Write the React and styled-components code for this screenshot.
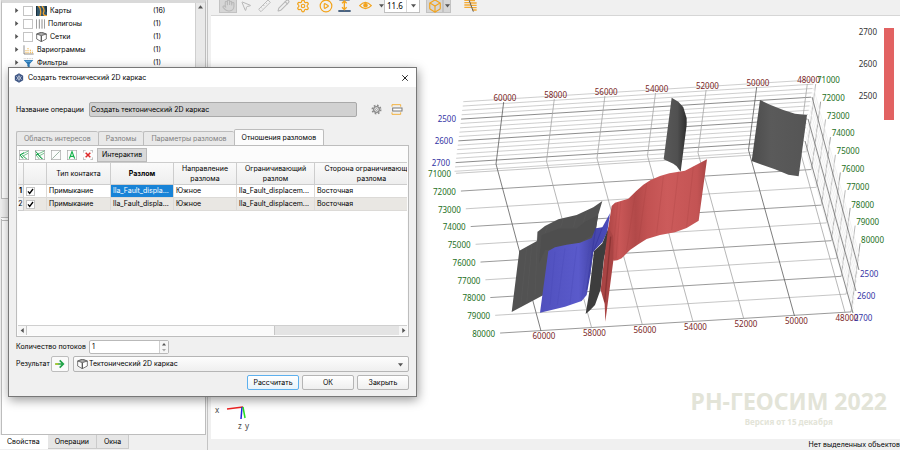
import React from "react";
import styled, { createGlobalStyle } from "styled-components";
import { Hand, MousePointer2, Pencil, Settings, CirclePlay, Box, X } from "lucide-react";

const GlobalStyle = createGlobalStyle`
  * { box-sizing: border-box; }
  html, body { margin: 0; padding: 0; }
  body, button, input, select { font-family: Inter, "Noto Sans", sans-serif; font-size: 7px; line-height: 12px; color: #000; }
  svg { display: block; flex: none; }
`;

const Page = styled.div`
  position: relative;
  display: flex;
  min-height: 100vh;
  background: #f0f0f0;
  overflow: hidden;
`;

/* ---------- left side ---------- */
const SidePane = styled.aside`
  flex: none;
  width: 208px;
  display: flex;
  flex-direction: column;
  border-right: 1px solid #c4c4c4;
`;
const TreePanel = styled.section`
  display: flex;
  height: 199px;
  margin: 0 1px 0 1px;
  background: #fff;
  border: 1px solid #bdbdbd;
  border-top: 3px solid #d9d9d9;
`;
const TreeList = styled.ul`
  flex: 1;
  margin: 0;
  padding: 1px 0 0;
  list-style: none;
`;
const TreeRow = styled.li`
  display: flex;
  align-items: center;
  height: 13px;
  padding-left: 12px;
`;
const TreeName = styled.label`
  display: flex;
  align-items: center;
  gap: 3px;
  width: 130px;
`;
const Expander = styled.span`
  width: 9px;
  flex: none;
`;
const TreeBox = styled.input`
  appearance: none;
  width: 10px;
  height: 10px;
  margin: 0;
  border: 1px solid #c4c4c4;
  background: #fff;
`;
const ScrollTrack = styled.div`
  width: 10px;
  background: #e9e9e9;
  border-left: 1px solid #cfcfcf;
  display: flex;
  justify-content: center;
  padding-top: 1px;
`;
const PropertiesPanel = styled.section`
  flex: 1;
  margin: 18px 1px 0 1px;
  background: #fff;
  border: 1px solid #bdbdbd;
  border-top: 4px double #bdbdbd;
`;
const SideTabs = styled.div`
  display: flex;
  height: 15px;
`;
const SideTab = styled.button`
  height: 14px;
  padding: 0 7px;
  border: 1px solid ${(p) => (p.$active ? "#fff" : "#cbcbcb")};
  border-left-width: 0;
  border-top: 0;
  background: ${(p) => (p.$active ? "#fff" : "#e6e6e6")};
`;

/* ---------- right side ---------- */
const Main = styled.main`
  flex: 1;
  min-width: 0;
  display: flex;
  flex-direction: column;
  padding-left: 3px;
`;
const Toolbar = styled.div`
  display: flex;
  align-items: center;
  height: 16px;
  padding: 0 0 4px 2px;
  border-bottom: 1px solid #d6d6d6;
`;
const Grip = styled.span`
  width: 4px;
  height: 11px;
  margin-right: ${(p) => p.$gap || 0}px;
  background: radial-gradient(circle, #c4c4c4 40%, transparent 45%) 0 0 / 2px 2px;
`;
const ToolButton = styled.button`
  display: flex;
  align-items: center;
  justify-content: center;
  width: ${(p) => p.$w || 18}px;
  height: 15px;
  padding: 0;
  border: 1px solid ${(p) => (p.$pressed ? "#c2c2c2" : "transparent")};
  background: ${(p) => (p.$pressed ? "#d6d6d6" : "transparent")};
`;
const ZoomField = styled.div`
  display: flex;
  align-items: center;
  height: 14px;
  width: 36px;
  margin-right: 6px;
  border: 1px solid #c0c0c0;
  background: #fff;
`;
const ZoomInput = styled.input`
  width: 22px;
  padding: 0 0 0 2px;
  border: 0;
  border-right: 1px solid #d8d8d8;
  background: none;
  font-family: "Noto Sans", sans-serif;
  font-size: 8px;
`;
const Viewport = styled.div`
  position: relative;
  flex: 1;
  display: flex;
  background: #fff;
`;
const Scene = styled.svg`
  width: 100%;
  flex: 1;
  font-family: "Noto Sans", sans-serif;
  font-size: 8px;
`;
const Watermark = styled.div`
  position: absolute;
  right: 13px;
  bottom: 10px;
  text-align: center;
  font-family: "Noto Sans", sans-serif;
  font-weight: 700;
  color: #e3e4d8;
`;
const ProductName = styled.div`
  font-size: 23px;
  line-height: 28px;
`;
const Version = styled.div`
  font-size: 8px;
  line-height: 14px;
`;
const StatusBar = styled.footer`
  height: 11px;
  text-align: right;
  white-space: nowrap;
`;

/* ---------- dialog ---------- */
const Dialog = styled.section`
  position: absolute;
  left: 8px;
  top: 67px;
  width: 409px;
  display: flex;
  flex-direction: column;
  background: #f0f0f0;
  border: 1px solid #777;
  box-shadow: 1px 3px 10px rgba(0, 0, 0, 0.4);
`;
const TitleBar = styled.header`
  display: flex;
  align-items: center;
  gap: 4px;
  height: 19px;
  padding: 0 6px 0 5px;
  background: #fff;
`;
const Title = styled.h1`
  flex: 1;
  margin: 0;
  font-size: 7px;
  font-weight: 400;
`;
const PlainButton = styled.button`
  padding: 0;
  border: 0;
  background: none;
`;
const Body = styled.div`
  display: flex;
  flex-direction: column;
  padding: 15px 7px 6px;
`;
const FormRow = styled.div`
  display: flex;
  align-items: center;
  height: ${(p) => p.$h || 15}px;
  white-space: nowrap;
`;
const FieldLabel = styled.label`
  width: ${(p) => p.$w}px;
  flex: none;
`;
const NameInput = styled.input`
  width: 268px;
  height: 15px;
  margin-right: 14px;
  padding: 0 1px;
  border: 1px solid #a9a9a9;
  border-radius: 2px;
  background: #d1d1d1;
`;
const TabStrip = styled.div`
  display: flex;
  align-items: flex-end;
  height: 16px;
  margin-top: 12px;
`;
const Tab = styled.button`
  height: ${(p) => (p.$active ? 17 : 14)}px;
  margin-bottom: ${(p) => (p.$active ? -1 : 0)}px;
  padding: 0 7px;
  border: 1px solid #bdbdbd;
  border-right-width: ${(p) => (p.$active ? 1 : 0)}px;
  border-bottom: 0;
  border-radius: 2px 2px 0 0;
  background: ${(p) => (p.$active ? "#fcfcfc" : "#e9e9e9")};
  color: ${(p) => (p.$active ? "#000" : "#808080")};
  white-space: nowrap;
`;
const TabPanel = styled.div`
  padding: 1px;
  border: 1px solid #bdbdbd;
  background: #fcfcfc;
`;
const IconBar = styled.div`
  display: flex;
  align-items: center;
  gap: 6px;
  height: 15px;
  padding-left: 1px;
`;
const ModeButton = styled.button`
  height: 14px;
  width: 50px;
  margin-left: -2px;
  padding: 0;
  border: 1px solid #bababa;
  background: #d9d9d9;
`;
const TableArea = styled.div`
  height: 163px;
  overflow: hidden;
  background: #fff;
`;
const Grid = styled.table`
  width: 411px;
  table-layout: fixed;
  border-collapse: separate;
  border-spacing: 0;
`;
const Head = styled.th`
  height: 23px;
  padding: 1px 0 0;
  border: 1px solid #cdcdcd;
  border-width: 1px 1px 1px 0;
  background: linear-gradient(#fafafa, #eeeeee);
  font-weight: ${(p) => (p.$bold ? 700 : 400)};
  line-height: 10px;
  white-space: pre;
`;
const Cell = styled.td`
  height: 13px;
  padding: 0 0 0 2px;
  border: 1px solid #dcdad7;
  border-width: 0 1px 1px 0;
  line-height: 12px;
  white-space: nowrap;
  background: ${(p) => (p.$selected ? "#1883d7" : p.$alt ? "#e9e7e3" : "#fff")};
  color: ${(p) => (p.$selected ? "#fff" : "#000")};
`;
const RowNumber = styled.th`
  padding: 0;
  border: 1px solid #cdcdcd;
  border-width: 0 1px 1px 0;
  background: #f2f2f2;
  line-height: 12px;
  font-weight: ${(p) => (p.$bold ? 700 : 400)};
`;
const CheckBox = styled.label`
  display: grid;
  width: 9px;
  height: 9px;
  > * { grid-area: 1 / 1; }
`;
const CheckInput = styled.input`
  appearance: none;
  margin: 0;
  border: 1px solid #c4c4c4;
  background: #fff;
  & + svg { visibility: hidden; }
  &:checked + svg { visibility: visible; }
`;
const HScroll = styled.div`
  display: flex;
  align-items: center;
  height: 10px;
  border-top: 1px solid #cfcfcf;
  background: #e4e4e4;
`;
const ScrollCap = styled.span`
  display: flex;
  align-items: center;
  justify-content: center;
  width: 8px;
  height: 9px;
  background: #f6f6f6;
`;
const ScrollThumb = styled.span`
  width: 64%;
  height: 9px;
  margin-right: auto;
  border: solid #c6c6c6;
  border-width: 0 1px;
  background: #fafafa;
`;
const SpinBox = styled.div`
  display: flex;
  width: 80px;
  height: 14px;
  border: 1px solid #b9b9b9;
  border-radius: 2px;
  background: #fff;
`;
const SpinInput = styled.input`
  flex: 1;
  min-width: 0;
  padding: 0 2px;
  border: 0;
  background: none;
  appearance: textfield;
  &::-webkit-inner-spin-button { display: none; }
`;
const SpinArrows = styled.span`
  display: flex;
  flex-direction: column;
  align-items: center;
  justify-content: center;
  gap: 2px;
  width: 9px;
  border-left: 1px solid #cfcfcf;
  background: #f6f6f6;
`;
const ArrowButton = styled.button`
  display: flex;
  align-items: center;
  justify-content: center;
  width: 18px;
  height: 16px;
  margin-right: 4px;
  padding: 0;
  border: 1px solid #bdbdbd;
  border-radius: 2px;
  background: #fafafa;
`;
const SelectBox = styled.div`
  flex: 1;
  display: flex;
  align-items: center;
  height: 16px;
  padding: 0 5px 0 3px;
  border: 1px solid #b5b5b5;
  border-radius: 2px;
  background: linear-gradient(#fdfdfd, #efefef);
`;
const ResultSelect = styled.select`
  appearance: none;
  flex: 1;
  padding: 0 1px;
  border: 0;
  background: none;
`;
const Actions = styled.div`
  display: flex;
  justify-content: flex-end;
  gap: 3px;
  margin-top: 3px;
`;
const ActionButton = styled.button`
  width: 52px;
  height: 15px;
  padding: 0;
  border: 1px solid ${(p) => (p.$primary ? "#5db0ee" : "#b5b5b5")};
  border-radius: 2px;
  background: linear-gradient(#ffffff, ${(p) => (p.$primary ? "#e8f3fb" : "#efefef")});
`;

/* ---------- small drawings ---------- */
const Triangle = ({ dir = "down", size = 5, color = "#555" }) => {
  const d = { down: "M0 2H8L4 7Z", up: "M0 7H8L4 2Z", right: "M2 0V8L7 4Z", left: "M6 0V8L1 4Z" }[dir];
  return <svg width={size} height={size} viewBox="0 0 8 8"><path d={d} fill={color} /></svg>;
};

const Tick = () => (
  <svg width="9" height="9" viewBox="0 0 27 27"><path d="M6 13L11 19L21 6" fill="none" stroke="#000" strokeWidth="4" /></svg>
);
const MapIcon = () => (
  <svg width="11" height="10" viewBox="0 0 33 30">
    <rect width="33" height="30" fill="#31566b" />
    <path d="M7 0Q18 8 12 30M18 0Q27 10 23 19T33 30" stroke="#f0a436" strokeWidth="4" fill="none" />
    <path d="M1 0V30M29 0L33 18" stroke="#192e3d" strokeWidth="4" />
  </svg>
);
const PolygonsIcon = () => (
  <svg width="9" height="10" viewBox="0 0 27 30"><path d="M1 1V29M10 1V29M18 1V29M26 1V29" stroke="#555" strokeWidth="2" /></svg>
);
const CubeIcon = () => (
  <svg width="11" height="10" viewBox="0 0 33 30" fill="none" stroke="#5a5a5a" strokeWidth="2.4" strokeLinejoin="round">
    <path d="M2 6L16 1L31 6V21L16 29L2 21Z" fill="#fff" />
    <path d="M2 6L16 11L31 6L16 1Z" fill="#aaa" />
    <path d="M16 11V29" strokeWidth="4" />
  </svg>
);
const VariogramIcon = () => (
  <svg width="11" height="10" viewBox="0 0 33 30"><path d="M3 1V27H32" stroke="#555" strokeWidth="2" fill="none" /><path d="M9 25V15M15 25V7M22 25V12M28 25V17" stroke="#eeb550" strokeWidth="3" strokeDasharray="4 2" /></svg>
);
const FilterIcon = () => (
  <svg width="11" height="10" viewBox="0 0 33 30"><path d="M2 2H31" stroke="#aaa" strokeWidth="2" strokeDasharray="3 2" /><path d="M2 6H31L20 18V29L13 25V18Z" fill="#2b79b7" /><path d="M6 8H27L22 12H10Z" fill="#5aa5dc" /></svg>
);
const AppIcon = () => (
  <svg width="10" height="10" viewBox="0 0 27 30">
    <path d="M13.500 1L26 8V22L13.500 29L1 22V8Z" fill="#3d5583" />
    <path d="M13.500 5V11M13.500 19V25M5 10L10 13M17 17L22 20M22 10L17 13M10 17L5 20" stroke="#c9d3e8" strokeWidth="2" />
    <circle cx="13.500" cy="15" r="4" fill="none" stroke="#fff" strokeWidth="2" />
  </svg>
);
const EyeIcon = () => (
  <svg width="13" height="9" viewBox="0 0 39 27" fill="none" stroke="#f2a31b" strokeWidth="3.500">
    <path d="M2 14Q19 -6 37 14Q19 32 2 14Z" /><circle cx="19.500" cy="13" r="5" fill="#f2a31b" />
  </svg>
);
const LevelsIcon = () => (
  <svg width="13" height="13" viewBox="0 0 39 39"><path d="M4 3H35" stroke="#29486b" strokeWidth="3" /><path d="M1 36H38" stroke="#29486b" strokeWidth="5" /><path d="M19 7V31M12 13L19 6L26 13M12 25L19 32L26 25" stroke="#f4a51c" strokeWidth="4" fill="none" /></svg>
);
const RulerIcon = () => (
  <svg width="13" height="13" viewBox="0 0 39 39" fill="none" stroke="#bcbcbc" strokeWidth="3"><path d="M2 31L30 3L37 10L9 38Z" /><path d="M9 25L12 28M16 18L19 21M23 11L26 14" /></svg>
);
const FaultLayersIcon = () => (
  <svg width="13" height="13" viewBox="0 0 39 39"><path d="M1 4H14M1 11H17M1 18H19M1 25H22M18 12H38M20 19H38M23 26H38M26 33H38M17 5H33" stroke="#f4ab36" strokeWidth="4" /><path d="M14 0L28 38" stroke="#444" strokeWidth="2.500" /></svg>
);
const RelationIcon = ({ kind }) => (
  <svg width="10" height="10" viewBox="0 0 30 30" fill="none">
    {kind !== "delete" && <rect x="1" y="1" width="28" height="28" stroke="#a5a5a5" strokeWidth="2" />}
    {(kind === "abut" || kind === "cross") && <path d="M28 3L3 15L13 27M27 10L12 18L20 26M9 15L24 27" stroke="#58b878" strokeWidth="2.500" />}
    {kind === "abut" && <path d="M15 8L3 15L11 24" stroke="#16a34a" strokeWidth="3" />}
    {kind === "cross" && <path d="M2 4L20 26M3 15L12 12" stroke="#16a34a" strokeWidth="3" />}
    {kind === "none" && <path d="M4 26L26 4" stroke="#8aa594" strokeWidth="2.500" />}
    {kind === "auto" && <path d="M7 26L15 5L23 26M10 19H20" stroke="#14b24b" strokeWidth="3.500" />}
    {kind === "delete" && (
      <>
        <path d="M8 1H1V8M22 1H29V8M8 29H1V22M22 29H29V22" stroke="#999" strokeWidth="2" />
        <path d="M8 8L22 22M22 8L8 22" stroke="#dd2929" strokeWidth="4.500" />
      </>
    )}
  </svg>
);
const GearIcon = () => (
  <svg width="11" height="11" viewBox="0 0 33 33" fill="none" stroke="#8a8a8a">
    <circle cx="16.500" cy="16.500" r="12.500" strokeWidth="5" strokeDasharray="5 4.800" />
    <circle cx="16.500" cy="16.500" r="8.500" strokeWidth="4" />
    <circle cx="16.500" cy="16.500" r="3" strokeWidth="2" />
  </svg>
);
const RenameIcon = () => (
  <svg width="12" height="11" viewBox="0 0 36 33" fill="none"><path d="M3 8V2H29V8M3 25V31H29V25" stroke="#f3b23f" strokeWidth="3" /><rect x="5" y="12" width="28" height="9" fill="#fff" stroke="#777" strokeWidth="3" /></svg>
);
const GreenArrow = () => (
  <svg width="10" height="10" viewBox="0 0 30 30" fill="none" strokeWidth="5"><path d="M1 15H24M14 4L25 15L14 26" stroke="#20a348" /><path d="M1 15H10" stroke="#b9c929" /></svg>
);

/* ---------- 3D scene ---------- */
const RED = "#7a2626";
const GREEN = "#237023";
const BLUE = "#3434a4";
const range = (n) => Array.from({ length: n }, (_, i) => i);

const FloorAndWalls = () => (
  <g fill="none" strokeWidth=".8">
    {range(17).map((i) => (
      <line key={`d${i}`} x1={463.3 - i * 0.55} y1={101.7 + i * 4.35} x2={814 - i * 0.75} y2={79.8 + i * 4.35}
        stroke={i % 5 === 4 ? "#6e6e6e" : "#c2c2c2"} />
    ))}
    {range(10).map((i) => (
      <line key={`f${i}`} x1={456 + i * 4.9} y1={173.3 + i * 17.75} x2={806.7 + i * 4.93} y2={151.7 + i * 17.8}
        stroke={i % 2 || i === 9 ? "#808080" : "#b8b8b8"} />
    ))}
    {range(7).map((i) => (
      <polyline key={`x${i}`}
        points={`${503.7 + i * 50.6},${102 - i * 3} ${496 + i * 50.5},${164 - i * 2.8} ${541 + i * 50.7},${331 - i * 3}`}
        stroke={i === 0 || i === 5 ? "#5c5c5c" : "#a4a4a4"} />
    ))}
    {range(10).map((i) => (
      <line key={`y${i}`} x1={815.7 + i * 4.93} y1={84 + i * 17.7} x2={806.7 + i * 4.93} y2={151.7 + i * 17.8} stroke={i % 2 ? "#888" : "#aaa"} />
    ))}
    {range(14).map((i) => (
      <line key={`w${i}`} x1={813.5 - i * 0.7} y1={88 + i * 4.4} x2={859.5 - i * 0.5} y2={256 + i * 4.4} stroke="#eeeeee" />
    ))}
    <path d="M812 97L859 270M808 119L856 291M805 141L853 313" stroke="#6e6e6e" />
  </g>
);

const AxisLabels = () => (
  <g>
    <g fill={RED} textAnchor="middle">
      {range(7).map((i) => <text key={`t${i}`} x={505 + i * 50.6} y={101 - i * 3}>{60000 - i * 2000}</text>)}
      {range(7).map((i) => <text key={`b${i}`} x={544 + i * 50.5} y={339 - i * 3}>{60000 - i * 2000}</text>)}
    </g>
    <g fill={GREEN}>
      {range(10).map((i) => <text key={`l${i}`} x={451 + i * 4.9} y={177 + i * 17.75} textAnchor="end">{71000 + i * 1000}</text>)}
      {range(10).map((i) => <text key={`r${i}`} x={817 + i * 4.9} y={83 + i * 17.8}>{71000 + i * 1000}</text>)}
    </g>
    <g fill={BLUE}>
      {range(3).map((i) => <text key={`z${i}`} x={456 - i * 3} y={122 + i * 22} textAnchor="end">{2500 + i * 100}</text>)}
      {range(3).map((i) => <text key={`q${i}`} x={860 - i * 3} y={277 + i * 22}>{2500 + i * 100}</text>)}
    </g>
  </g>
);

const Faults = () => (
  <g>
    <defs>
      <linearGradient id="dark" x1="0" x2="1"><stop offset="0" stopColor="#595959" /><stop offset=".6" stopColor="#505050" /><stop offset="1" stopColor="#2e2e2e" /></linearGradient>
      <linearGradient id="slab" x1="0" x2="1"><stop offset="0" stopColor="#4c4c4c" /><stop offset=".35" stopColor="#5a5a5a" /><stop offset="1" stopColor="#555" /></linearGradient>
      <linearGradient id="folds" x1="0" x2="1">
        <stop offset="0" stopColor="#ad4545" /><stop offset=".12" stopColor="#c95757" /><stop offset=".28" stopColor="#b24949" /><stop offset=".4" stopColor="#c25252" />
        <stop offset=".6" stopColor="#cc5b5b" /><stop offset=".9" stopColor="#c45454" /><stop offset="1" stopColor="#a94646" />
      </linearGradient>
      <linearGradient id="blueFold" x1="0" x2="1"><stop offset="0" stopColor="#5050bd" /><stop offset=".55" stopColor="#5a5acb" /><stop offset=".75" stopColor="#4646a9" /><stop offset="1" stopColor="#4b4bbd" /></linearGradient>
    </defs>
    <g transform="translate(660 10) scale(.33333)">
      <path d="M35 263L55 275L70 292L80 325L80 345L62 485L50 469L40 461L11 448Z" fill="url(#dark)" />
      <path d="M300 270L330 284L370 300L405 311L441 315L416 499L385 494L345 478L275 453Z" fill="url(#slab)" />
    </g>
    <g transform="translate(430 190) scale(.33333)">
      <path d="M517 33L490 52L440 75L385 88L345 108L323 125L321 153L268 182L245 366L335 318L480 260L503 80Z" fill="#525252" />
      <path d="M335 136L385 116L440 116L465 95L505 76L495 130L430 170L345 180L327 220Z" fill="#4e4e4e" />
      <path d="M440 76L430 112M400 85L392 112M470 65L460 97M355 105L345 130M323 125L315 315M290 172L272 350M305 165L290 342" stroke="#5c5c5c" strokeWidth="3" opacity=".4" />
      <path d="M355 183L375 172L410 164L450 158L485 144L497 115L517 112L540 70L532 125L518 155L490 185L480 260L470 315L455 333L405 350L330 368Z" fill="url(#blueFold)" />
      <path d="M375 185L360 345M405 175L382 345M440 170L420 340M480 160L455 325" stroke="#4747b5" strokeWidth="3" opacity=".3" />
      <path d="M497 115L470 300M517 112L490 185" stroke="#3737a0" strokeWidth="3" opacity=".7" />
      <path d="M545 48L555 38L595 26L618 4L640 -16L662 -30L690 -42L718 -50L765 -58L831 -92L806 92L770 114L735 127L690 135L650 147L625 163L600 180L575 205L562 211L550 212L533 125Z" fill="url(#folds)" />
      <path d="M572 35L558 205M615 15L590 180M650 -20L626 155M700 -40L680 130M745 -55L725 120M790 -70L770 110M563 40L548 190" stroke="#a53e3e" strokeWidth="3" opacity=".25" />
      <path d="M492 184L517 160L533 120L536 142L522 205L512 298L495 345L480 361L467 372L478 305Z" fill="#3d3d3d" />
      <path d="M535 110L549 138L550 212L526 395L524 342L512 300L522 210Z" fill="#a94444" />
      <path d="M542 140L524 335" stroke="#8c3434" strokeWidth="4" />
    </g>
  </g>
);

const AxisTriad = () => (
  <g fill="#444">
    <g strokeWidth="1.500">
      <path d="M227 409L243 407" stroke="#ee2222" />
      <path d="M242 407L241 419" stroke="#2222dd" />
      <path d="M243 407L245 418" stroke="#22dd22" />
    </g>
    <text x="215" y="413">x</text><text x="238" y="429">z</text><text x="245" y="429">y</text>
  </g>
);

const Colorbar = () => (
  <g fill="#333" textAnchor="end">
    <rect x="884" y="28" width="10" height="92" fill="#e26262" />
    <text x="877" y="35">2700</text><text x="877" y="67">2600</text><text x="877" y="99">2500</text>
  </g>
);

/* ---------- data ---------- */
const treeItems = [
  { name: "Карты", count: 16, Icon: MapIcon, box: true },
  { name: "Полигоны", count: 1, Icon: PolygonsIcon, box: true },
  { name: "Сетки", count: 1, Icon: CubeIcon, box: true },
  { name: "Вариограммы", count: 1, Icon: VariogramIcon },
  { name: "Фильтры", count: 1, Icon: FilterIcon },
];
const dialogTabs = ["Область интересов", "Разломы", "Параметры разломов", "Отношения разломов"];
const columns = ["", "Тип контакта", "Разлом", "Направление\nразлома", "Ограничивающий\nразлом", "Сторона ограничивающего\nразлома"];
const widths = [6, 23, 64, 63, 63, 78, 114];
const relations = ["Примыкание", "lla_Fault_displa...", "Южное", "lla_Fault_displacem...", "Восточная"];
const GRAY = "#b8b8b8";
const ORANGE = "#f2a31b";

function SideArea() {
  return (
    <SidePane>
      <TreePanel>
        <TreeList>
          {treeItems.map(({ name, count, Icon, box }) => (
            <TreeRow key={name}>
              <Expander><Triangle dir="right" /></Expander>
              <TreeName>
                {box && <TreeBox type="checkbox" />}
                <Icon />
                {name}
              </TreeName>
              <span>({count})</span>
            </TreeRow>
          ))}
        </TreeList>
        <ScrollTrack><Triangle dir="up" /></ScrollTrack>
      </TreePanel>
      <PropertiesPanel />
      <SideTabs>
        <SideTab $active>Свойства</SideTab>
        <SideTab>Операции</SideTab>
        <SideTab>Окна</SideTab>
      </SideTabs>
    </SidePane>
  );
}

function SceneToolbar() {
  return (
    <Toolbar>
      <Grip $gap={2} />
      <ToolButton $pressed aria-label="Hand"><Hand size={13} color={GRAY} /></ToolButton>
      <ToolButton aria-label="Select"><MousePointer2 size={12} color={GRAY} /></ToolButton>
      <ToolButton $w={19} aria-label="Measure"><RulerIcon /></ToolButton>
      <ToolButton $w={19} aria-label="Edit"><Pencil size={13} color={GRAY} /></ToolButton>
      <ToolButton $w={20} aria-label="Settings"><Settings size={14} color={ORANGE} /></ToolButton>
      <ToolButton $w={25} aria-label="Play"><CirclePlay size={14} color={ORANGE} /></ToolButton>
      <ToolButton $w={13} aria-label="Levels"><LevelsIcon /></ToolButton>
      <ToolButton $w={28} aria-label="Visibility"><EyeIcon /></ToolButton>
      <ToolButton $w={5} aria-label="Visibility menu"><Triangle /></ToolButton>
      <ZoomField>
        <ZoomInput aria-label="Scale" defaultValue="11.6" />
        <ToolButton $w={12} aria-label="Scale menu"><Triangle /></ToolButton>
      </ZoomField>
      <ToolButton $pressed $w={17} aria-label="Box"><Box size={14} color={ORANGE} /></ToolButton>
      <ToolButton $pressed $w={8} aria-label="Box menu"><Triangle /></ToolButton>
      <Grip $gap={3} />
      <ToolButton $w={24} aria-label="Faults"><FaultLayersIcon /></ToolButton>
    </Toolbar>
  );
}

function FaultDialog() {
  return (
    <Dialog role="dialog" aria-labelledby="dialog-title">
      <TitleBar>
        <AppIcon />
        <Title id="dialog-title">Создать тектонический 2D каркас</Title>
        <PlainButton aria-label="Close"><X size={10} strokeWidth={2} /></PlainButton>
      </TitleBar>
      <Body>
        <FormRow>
          <FieldLabel $w={73} htmlFor="op-name">Название операции</FieldLabel>
          <NameInput id="op-name" readOnly value="Создать тектонический 2D каркас" />
          <PlainButton aria-label="Options"><GearIcon /></PlainButton>
          <Expander />
          <PlainButton aria-label="Rename"><RenameIcon /></PlainButton>
        </FormRow>
        <TabStrip role="tablist">
          {dialogTabs.map((t, i) => <Tab key={t} role="tab" $active={i === 3}>{t}</Tab>)}
        </TabStrip>
        <TabPanel>
          <IconBar>
            {["abut", "cross", "none", "auto", "delete"].map((kind) => (
              <PlainButton key={kind} aria-label={kind}><RelationIcon kind={kind} /></PlainButton>
            ))}
            <ModeButton>Интерактив</ModeButton>
          </IconBar>
          <TableArea>
            <Grid>
              <colgroup>{widths.map((w, i) => <col key={i} width={w} />)}</colgroup>
              <thead>
                <tr>
                  <Head />
                  {columns.map((c) => <Head key={c} $bold={c === "Разлом"}>{c}</Head>)}
                </tr>
              </thead>
              <tbody>
                {[1, 2].map((n) => (
                  <tr key={n}>
                    <RowNumber $bold={n === 1}>{n}</RowNumber>
                    <Cell $alt={n === 2}>
                      <CheckBox>
                        <CheckInput type="checkbox" defaultChecked aria-label={`${n}`} />
                        <Tick />
                      </CheckBox>
                    </Cell>
                    {relations.map((r, i) => (
                      <Cell key={r} $alt={n === 2} $selected={n === 1 && i === 1}>{r}</Cell>
                    ))}
                  </tr>
                ))}
              </tbody>
            </Grid>
          </TableArea>
          <HScroll>
            <ScrollCap><Triangle dir="left" /></ScrollCap>
            <ScrollThumb />
            <ScrollCap><Triangle dir="right" /></ScrollCap>
          </HScroll>
        </TabPanel>
        <FormRow $h={19}>
          <FieldLabel $w={73} htmlFor="threads">Количество потоков</FieldLabel>
          <SpinBox>
            <SpinInput id="threads" type="number" defaultValue={1} />
            <SpinArrows><Triangle dir="up" size={4} /><Triangle size={4} color="#aaa" /></SpinArrows>
          </SpinBox>
        </FormRow>
        <FormRow $h={16}>
          <FieldLabel $w={35} htmlFor="result">Результат</FieldLabel>
          <ArrowButton aria-label="Go"><GreenArrow /></ArrowButton>
          <SelectBox>
            <CubeIcon />
            <ResultSelect id="result"><option>Тектонический 2D каркас</option></ResultSelect>
            <Triangle />
          </SelectBox>
        </FormRow>
        <Actions>
          <ActionButton $primary>Рассчитать</ActionButton>
          <ActionButton>ОК</ActionButton>
          <ActionButton>Закрыть</ActionButton>
        </Actions>
      </Body>
    </Dialog>
  );
}

export default function App() {
  return (
    <Page>
      <GlobalStyle />
      <SideArea />
      <Main>
        <SceneToolbar />
        <Viewport>
          <Scene viewBox="211 16 689 423" preserveAspectRatio="xMaxYMin meet">
            <FloorAndWalls />
            <Faults />
            <AxisLabels />
            <AxisTriad />
            <Colorbar />
          </Scene>
          <Watermark>
            <ProductName>РН-ГЕОСИМ 2022</ProductName>
            <Version>Версия от 15 декабря</Version>
          </Watermark>
        </Viewport>
        <StatusBar>Нет выделенных объектов</StatusBar>
      </Main>
      <FaultDialog />
    </Page>
  );
}
